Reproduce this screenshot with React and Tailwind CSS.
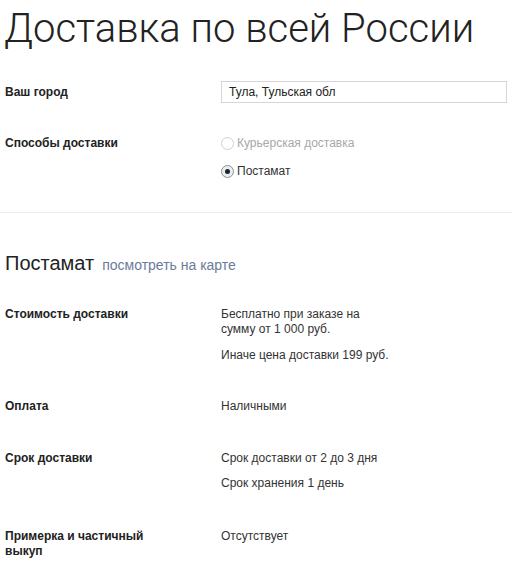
import React from 'react';

function Radio({ checked, disabled, children }) {
  return (
    <label className={`flex items-center h-[15px] ${disabled ? 'text-[#a8a8a8]' : 'text-[#333]'}`}>
      <span className={`w-[13px] h-[13px] rounded-full border flex items-center justify-center mr-[3px] ${disabled ? 'border-[#d0d0d0] bg-white' : 'border-[#8f8f8f] bg-[#e8eef7]'}`}>
        {checked && <span className="w-[5px] h-[5px] rounded-full bg-[#222]" />}
      </span>
      {children}
    </label>
  );
}

function Row({ label, children, className = '' }) {
  return (
    <div className={`flex items-start ${className}`}>
      <div className="w-[216px] pr-[60px] font-bold text-[#222]">{label}</div>
      <div className="w-[170px] text-[#333]">{children}</div>
    </div>
  );
}

export default function App() {
  return (
    <div className="bg-white min-h-[561px] text-[12px] leading-[15px] font-['Liberation_Sans',Arial,sans-serif]">
      <h1 className="pt-[9px] pl-[4px] text-[40px] leading-[40px] font-light text-[#222] font-['Roboto',sans-serif]">
        Доставка по всей России
      </h1>

      <div className="pl-[5px]">
        <div className="flex items-center mt-[32px]">
          <div className="w-[216px] font-bold text-[#222]">Ваш город</div>
          <div className="w-[286px] h-[22px] border border-[#d6d6d6] flex items-center pl-[7px] text-[#222]">
            Тула, Тульская обл
          </div>
        </div>

        <div className="flex items-start mt-[33px]">
          <div className="w-[216px] font-bold text-[#222]">Способы доставки</div>
          <div className="flex flex-col gap-[13px]">
            <Radio disabled>Курьерская доставка</Radio>
            <Radio checked>Постамат</Radio>
          </div>
        </div>
      </div>

      <div className="mt-[33px] border-t border-[#ececec]" />

      <div className="pl-[5px]">
        <div className="mt-[38px] flex items-baseline">
          <h2 className="text-[20px] leading-[24px] text-[#222]">Постамат</h2>
          <a className="ml-[8px] text-[14px] text-[#6c7b9a]">посмотреть на карте</a>
        </div>

        <Row label="Стоимость доставки" className="mt-[32px]">
          <p>Бесплатно при заказе на сумму от 1 000 руб.</p>
          <p className="mt-[11px] whitespace-nowrap">Иначе цена доставки 199 руб.</p>
        </Row>

        <Row label="Оплата" className="mt-[36px]">
          <p>Наличными</p>
        </Row>

        <Row label="Срок доставки" className="mt-[37px]">
          <p className="whitespace-nowrap">Срок доставки от 2 до 3 дня</p>
          <p className="mt-[10px]">Срок хранения 1 день</p>
        </Row>

        <Row label="Примерка и частичный выкуп" className="mt-[38px]">
          <p>Отсутствует</p>
        </Row>
      </div>
    </div>
  );
}
